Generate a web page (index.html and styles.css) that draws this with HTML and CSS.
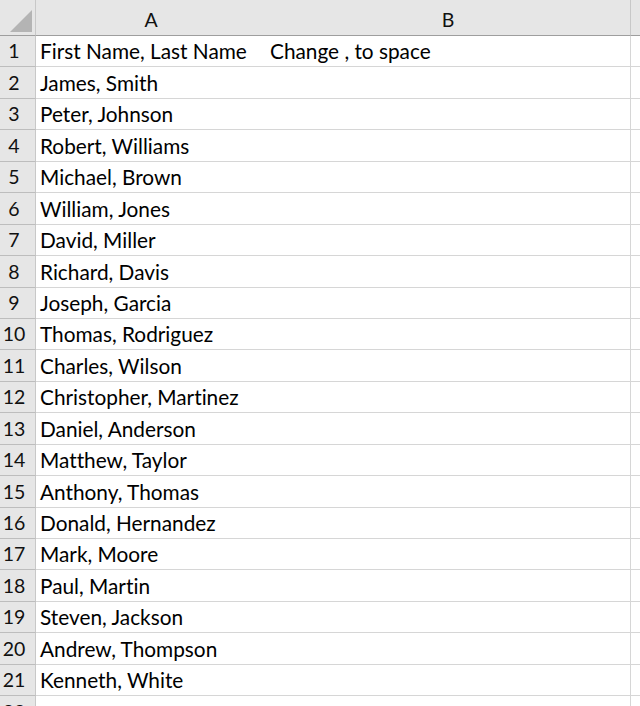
FILE: index.html
```html
<!DOCTYPE html>
<html>
<head>
<meta charset="utf-8">
<link rel="stylesheet" href="styles.css">
</head>
<body>
<div class="sheet">
  <div class="hdr corner"><span class="tri"></span></div>
  <div class="hdr colhdr">A</div>
  <div class="hdr colhdr colb">B</div>
  <div class="hdr colrest"></div>

  <div class="num">1</div><div class="cell">First Name, Last Name</div><div class="cell cb">Change , to space</div><div class="cell rest"></div>
  <div class="num">2</div><div class="cell">James, Smith</div><div class="cell cb"></div><div class="cell rest"></div>
  <div class="num">3</div><div class="cell">Peter, Johnson</div><div class="cell cb"></div><div class="cell rest"></div>
  <div class="num">4</div><div class="cell">Robert, Williams</div><div class="cell cb"></div><div class="cell rest"></div>
  <div class="num">5</div><div class="cell">Michael, Brown</div><div class="cell cb"></div><div class="cell rest"></div>
  <div class="num">6</div><div class="cell">William, Jones</div><div class="cell cb"></div><div class="cell rest"></div>
  <div class="num">7</div><div class="cell">David, Miller</div><div class="cell cb"></div><div class="cell rest"></div>
  <div class="num">8</div><div class="cell">Richard, Davis</div><div class="cell cb"></div><div class="cell rest"></div>
  <div class="num">9</div><div class="cell">Joseph, Garcia</div><div class="cell cb"></div><div class="cell rest"></div>
  <div class="num">10</div><div class="cell">Thomas, Rodriguez</div><div class="cell cb"></div><div class="cell rest"></div>
  <div class="num">11</div><div class="cell">Charles, Wilson</div><div class="cell cb"></div><div class="cell rest"></div>
  <div class="num">12</div><div class="cell">Christopher, Martinez</div><div class="cell cb"></div><div class="cell rest"></div>
  <div class="num">13</div><div class="cell">Daniel, Anderson</div><div class="cell cb"></div><div class="cell rest"></div>
  <div class="num">14</div><div class="cell">Matthew, Taylor</div><div class="cell cb"></div><div class="cell rest"></div>
  <div class="num">15</div><div class="cell">Anthony, Thomas</div><div class="cell cb"></div><div class="cell rest"></div>
  <div class="num">16</div><div class="cell">Donald, Hernandez</div><div class="cell cb"></div><div class="cell rest"></div>
  <div class="num">17</div><div class="cell">Mark, Moore</div><div class="cell cb"></div><div class="cell rest"></div>
  <div class="num">18</div><div class="cell">Paul, Martin</div><div class="cell cb"></div><div class="cell rest"></div>
  <div class="num">19</div><div class="cell">Steven, Jackson</div><div class="cell cb"></div><div class="cell rest"></div>
  <div class="num">20</div><div class="cell">Andrew, Thompson</div><div class="cell cb"></div><div class="cell rest"></div>
  <div class="num">21</div><div class="cell">Kenneth, White</div><div class="cell cb"></div><div class="cell rest"></div>
  <div class="num">22</div><div class="cell"></div><div class="cell cb"></div><div class="cell rest"></div>
</div>
</body>
</html>
```
FILE: styles.css
```css
html, body {
  margin: 0;
  padding: 0;
  background: #ffffff;
  overflow: hidden;
}
.sheet {
  width: 640px;
  height: 706px;
  overflow: hidden;
  display: grid;
  grid-template-columns: 36px 230px 365px 1fr;
  grid-template-rows: 36px repeat(22, 31.45px);
  font-family: Lato, "Open Sans", sans-serif;
  font-variant-ligatures: none;
  font-feature-settings: "liga" 0, "clig" 0;
  color: #000;
}
.hdr {
  background: #e6e6e6;
  border-bottom: 1px solid #9e9e9e;
  box-sizing: border-box;
  font-size: 19.5px;
  color: #111;
  display: flex;
  align-items: flex-end;
  justify-content: center;
  padding-bottom: 4px;
}
.corner {
  border-right: 1px solid #c8c8c8;
  position: relative;
}
.tri {
  position: absolute;
  left: 10px;
  top: 10px;
  width: 22px;
  height: 22px;
  background: #b4b4b4;
  clip-path: polygon(100% 0, 100% 100%, 0 100%);
}
.colb {
  border-right: 1px solid #c8c8c8;
}
.num {
  background: #e6e6e6;
  border-right: 1px solid #c8c8c8;
  border-bottom: 1px solid #bdbdbd;
  box-sizing: border-box;
  font-size: 19.5px;
  color: #111;
  display: flex;
  align-items: flex-end;
  justify-content: center;
  padding-right: 7px;
  padding-bottom: 4px;
}
.cell {
  border-bottom: 1px solid #d6d6d6;
  box-sizing: border-box;
  font-size: 20.8px;
  white-space: nowrap;
  display: flex;
  align-items: flex-end;
  padding-left: 4px;
  padding-bottom: 3px;
  overflow: visible;
}
.cb {
  border-right: 1px solid #d6d6d6;
}
```
